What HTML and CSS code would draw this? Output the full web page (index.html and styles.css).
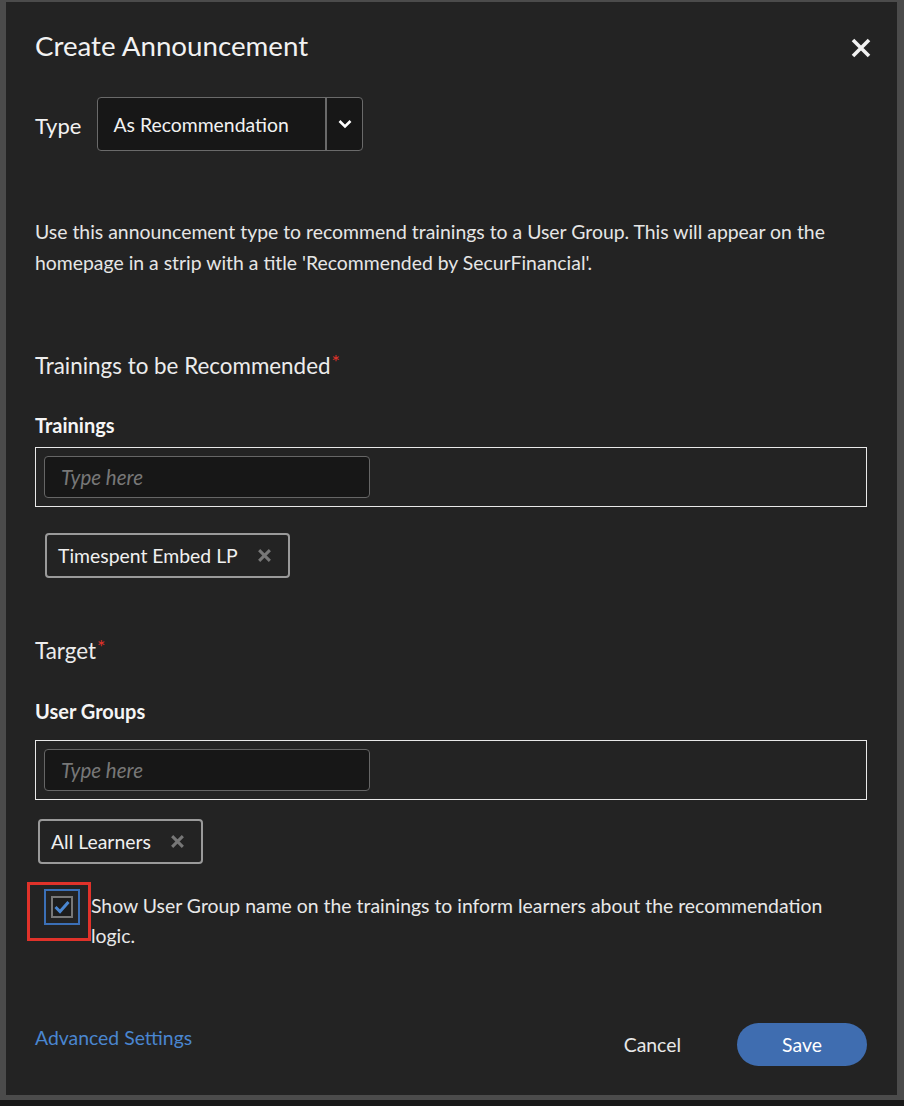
FILE: index.html
```html
<!DOCTYPE html>
<html>
<head>
<meta charset="utf-8">
<link rel="stylesheet" href="styles.css">
</head>
<body>
<div class="frame">
  <div class="panel">
    <div class="header">
      <h1 class="title">Create Announcement</h1>
      <svg class="close" width="22" height="22" viewBox="0 0 22 22"><path d="M3 3 L19 19 M19 3 L3 19" stroke="#f2f2f2" stroke-width="3.6" stroke-linecap="butt"/></svg>
    </div>
    <div class="type-row">
      <span class="type-label">Type</span>
      <div class="select">
        <span class="select-value">As Recommendation</span>
        <span class="select-arrow"><svg width="14" height="10" viewBox="0 0 14 10"><path d="M1.5 2 L7 7.5 L12.5 2" fill="none" stroke="#fff" stroke-width="2.6"/></svg></span>
      </div>
    </div>
    <p class="desc">Use this announcement type to recommend trainings to a User Group. This will appear on the homepage in a strip with a title 'Recommended by SecurFinancial'.</p>
    <h2 class="section">Trainings to be Recommended<span class="req">*</span></h2>
    <div class="field-label first">Trainings</div>
    <div class="box">
      <div class="input">Type here</div>
    </div>
    <div class="chip chip-a">Timespent Embed LP<span class="chip-x"><svg width="15" height="15" viewBox="0 0 14 14"><path d="M2 2 L12 12 M12 2 L2 12" stroke="#777" stroke-width="2.8"/></svg></span></div>
    <h2 class="section target">Target<span class="req">*</span></h2>
    <div class="field-label second">User Groups</div>
    <div class="box">
      <div class="input">Type here</div>
    </div>
    <div class="chip chip-b">All Learners<span class="chip-x"><svg width="15" height="15" viewBox="0 0 14 14"><path d="M2 2 L12 12 M12 2 L2 12" stroke="#777" stroke-width="2.8"/></svg></span></div>
    <div class="check-row">
      <div class="check-wrap">
        <div class="check-focus">
          <div class="check-box"><svg width="18" height="18" viewBox="0 0 18 18"><path d="M2.5 9 L7 13.5 L15.5 4" fill="none" stroke="#4a86d0" stroke-width="3"/></svg></div>
        </div>
        <div class="annot"></div>
      </div>
      <p class="check-text">Show User Group name on the trainings to inform learners about the recommendation logic.</p>
    </div>
    <div class="footer">
      <a class="adv">Advanced Settings</a>
      <div class="actions">
        <span class="cancel">Cancel</span>
        <span class="save">Save</span>
      </div>
    </div>
  </div>
</div>
</body>
</html>
```

FILE: styles.css
```css
* { box-sizing: border-box; }
html, body { margin: 0; padding: 0; }
body {
  background: #181818;
  font-family: "Lato", "Open Sans", sans-serif;
  color: #e8e8e8;
  width: 904px;
  height: 1106px;
  overflow: hidden;
}
.frame {
  background: #4b4b4b;
  height: 1100px;
  padding: 2px 7px 5px 6px;
}
.panel {
  background: #232323;
  height: 100%;
  padding: 28px 30px 0 29px;
  display: flex;
  flex-direction: column;
}
.header {
  display: flex;
  justify-content: space-between;
  align-items: center;
  height: 32px;
}
.title {
  margin: 0;
  font-weight: 400;
  font-size: 27.7px;
  color: #f2f2f2;
  line-height: 32px;
}
.close { margin-right: -5px; margin-top: 4px; }
.type-row {
  margin-top: 35px;
  display: flex;
  align-items: center;
  gap: 16px;
}
.type-label { font-size: 22px; color: #f2f2f2; padding-top: 2px; }
.select {
  width: 266px;
  height: 54px;
  background: #171717;
  border: 1px solid #6a6a6a;
  border-radius: 4px;
  display: flex;
  align-items: center;
}
.select-value {
  flex: 1;
  padding-left: 15px;
  font-size: 19.4px;
  color: #f2f2f2;
}
.select-arrow {
  width: 37px;
  height: 100%;
  border-left: 2px solid #6a6a6a;
  display: flex;
  align-items: center;
  justify-content: center;
}
.desc {
  margin: 65px 0 0;
  font-size: 19.4px;
  line-height: 31px;
  color: #e6e6e6;
}
.section {
  margin: 74px 0 0;
  font-weight: 400;
  font-size: 22.4px;
  line-height: 28px;
  color: #ececec;
}
.section.target { margin-top: 59px; }
.req { color: #e0322a; font-size: 20px; vertical-align: top; line-height: 18px; margin-left: 1px; }
.field-label {
  font-weight: 700;
  font-size: 20px;
  line-height: 24px;
  color: #f5f5f5;
}
.field-label.first { margin-top: 33px; margin-bottom: 10px; }
.field-label.second { margin-top: 34px; margin-bottom: 17px; }
.box {
  border: 1px solid #e8e8e8;
  height: 60px;
  padding: 8px;
}
.input {
  width: 326px;
  height: 42px;
  background: #171717;
  border: 1px solid #666;
  border-radius: 4px;
  font-style: italic;
  font-size: 20.5px;
  color: #777;
  padding-left: 16px;
  display: flex;
  align-items: center;
}
.chip {
  align-self: flex-start;
  height: 45px;
  border: 2px solid #9a9a9a;
  border-radius: 4px;
  display: flex;
  align-items: center;
  font-size: 19.4px;
  color: #f0f0f0;
  padding: 0 16px 0 11px;
}
.chip-a { margin: 26px 0 0 10px; }
.chip-b { margin: 19px 0 0 3px; }
.chip-x { margin-left: 19px; display: flex; }
.check-row {
  margin-top: 18px;
  display: flex;
  align-items: flex-start;
}
.check-wrap {
  position: relative;
  width: 56px;
  padding: 7px 0 0 9px;
  flex: none;
}
.check-focus {
  width: 36px;
  height: 36px;
  border: 2px solid #3b6fb6;
  display: flex;
  align-items: center;
  justify-content: center;
}
.check-box {
  width: 22px;
  height: 22px;
  border: 2px solid #787878;
  background: #1c1c1c;
  display: flex;
  align-items: center;
  justify-content: center;
}
.annot {
  position: absolute;
  left: -8px;
  top: 0;
  width: 64px;
  height: 59px;
  border: 3px solid #e0322a;
}
.check-text {
  margin: 9px 0 0;
  font-size: 19.4px;
  line-height: 30px;
  color: #e8e8e8;
}
.footer {
  margin-top: auto;
  margin-bottom: 29px;
  display: flex;
  justify-content: space-between;
  align-items: center;
}
.adv { color: #4a86d0; font-size: 19.4px; margin-top: -14px; }
.actions { display: flex; align-items: center; gap: 56px; }
.cancel { font-size: 19.4px; color: #e8e8e8; }
.save {
  width: 130px;
  height: 43px;
  border-radius: 22px;
  background: #3f6db0;
  color: #fff;
  font-size: 19.4px;
  display: flex;
  align-items: center;
  justify-content: center;
}
```
